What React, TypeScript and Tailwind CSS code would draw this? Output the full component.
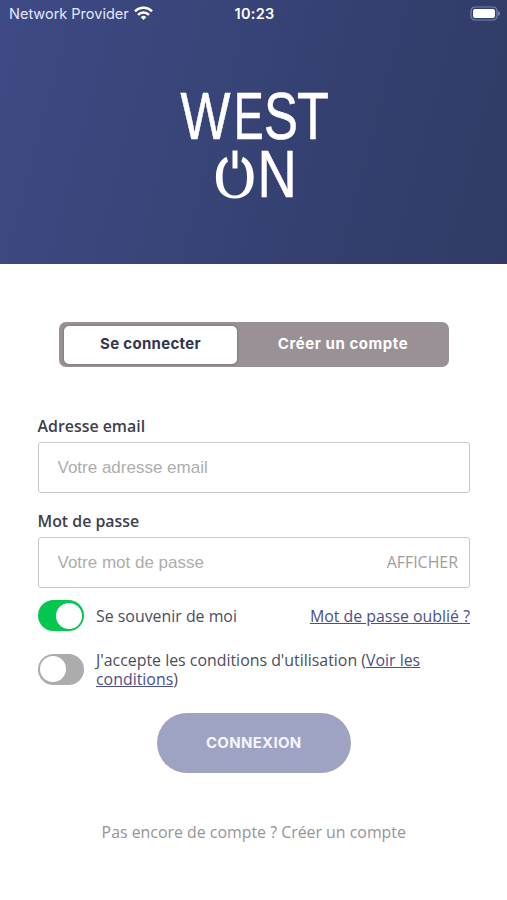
import { useState } from 'react';

const logoLetters = [
  { char: 'W', x: 180, y: 138.7, scale: 0.79 },
  { char: 'E', x: 233.3, y: 138.7, scale: 0.67 },
  { char: 'S', x: 263.4, y: 138.7, scale: 0.76 },
  { char: 'T', x: 296.4, y: 138.7, scale: 0.78 },
  { char: 'N', x: 256.9, y: 197.1, scale: 0.81 },
];

function StatusBar() {
  return (
    <div className="flex h-7 items-center justify-between pr-[7px] pl-[9px] font-['Inter',sans-serif] text-[14.5px] leading-7 text-[#e3e7fa]">
      <div className="flex w-52 items-center gap-[5px]">
        <span className="whitespace-nowrap">Network Provider</span>
        <svg width="19" height="14" viewBox="0 0 19 14" fill="none" stroke="#fff" strokeWidth="2.6" className="-mt-0.5 shrink-0">
          <path d="M1 5.3a12 12 0 0 1 17 0" />
          <path d="M4 8.8a7.8 7.8 0 0 1 11 0" />
          <path d="M9.5 14 6.7 11.2a4 4 0 0 1 5.6 0Z" fill="#fff" stroke="none" />
        </svg>
      </div>
      <span className="font-semibold tracking-[0.3px] text-white">10:23</span>
      <div className="flex w-52 justify-end">
        <svg width="30" height="15" viewBox="0 0 30 15" className="-mt-0.5">
          <rect x="1" y="1" width="26" height="13" rx="4" fill="none" stroke="#7d84b0" strokeWidth="1.2" />
          <rect x="3" y="2.9" width="22" height="9.2" rx="2" fill="#fff" />
          <path d="M28.3 5.3v4.6c1-.4 1.5-1.2 1.5-2.3S29.3 5.7 28.3 5.3Z" fill="#8f96bd" />
        </svg>
      </div>
    </div>
  );
}

function Logo() {
  return (
    <svg
      width="190"
      height="150"
      viewBox="158.5 70 190 150"
      className="mx-auto mt-[42px] block overflow-visible font-['Liberation_Sans',Arial,sans-serif] text-[67px]"
      fill="#fff"
    >
      <g stroke="#fff" strokeWidth="0.6">
        {logoLetters.map((l) => (
          <text key={l.char} transform={`translate(${l.x} ${l.y}) scale(${l.scale} 1)`}>
            {l.char}
          </text>
        ))}
      </g>
      {/* Power symbol */}
      <path d="M232 150.5h5v18h-5Z" />
      <path d="M226 156.8C218.500 160.500 215.400 168 215.400 177.500c0 13 7 21 18.900 21s18.900-8 18.900-21c0-9.500-3.300-17-10.800-20.700l-1.600 4.600c4.300 3.200 5.700 8.400 5.700 16.100 0 11.600-4.400 18-12.200 18s-12.200-6.400-12.200-18c0-7.700 1.200-12.900 5.500-16.100Z" />
    </svg>
  );
}

function Toggle({ checked, onChange, label }: { checked: boolean; onChange: () => void; label: string }) {
  return (
    <button
      role="switch"
      aria-checked={checked}
      aria-label={label}
      onClick={onChange}
      className={`flex h-[31px] w-[46px] shrink-0 items-center rounded-full px-[2px] ${checked ? 'justify-end bg-[#05c74f]' : 'justify-start bg-[#acacac]'}`}
    >
      <span className="size-[26px] rounded-full bg-white" />
    </button>
  );
}

export default function App() {
  const [remember, setRemember] = useState(true);
  const [accepted, setAccepted] = useState(false);
  const [visible, setVisible] = useState(false);

  return (
    <div className="h-[900px] w-[507px] overflow-hidden bg-white font-['Open_Sans',sans-serif] text-[15.9px] text-[#4b4d5c]">
      <header className="h-[263.5px] bg-[linear-gradient(105deg,#3f4a85_0%,#364173_55%,#303b66_100%)]">
        <StatusBar />
        <Logo />
      </header>

      <main className="pt-[58.5px] pr-[37px] pl-[37.5px]">
        {/* Tabs */}
        <div className="ml-[21.5px] flex h-[45px] w-[390px] rounded-[7px] bg-[#999195] py-[3.5px] pr-1 pl-[5px] font-['Inter',sans-serif] text-[15px] font-bold">
          <button className="w-[173px] rounded-[5px] bg-white tracking-[0.3px] text-[#34344f] shadow-[0_0_2px_1px_#817b7e]">
            Se connecter
          </button>
          <button className="flex-1 pl-1 tracking-[0.55px] text-white">Créer un compte</button>
        </div>

        {/* Fields */}
        <label className="mt-[47px] block leading-6 font-semibold text-[#3e404f]" htmlFor="email">
          Adresse email
        </label>
        <input
          id="email"
          type="email"
          placeholder="Votre adresse email"
          className="mt-[3.5px] block h-[51.5px] w-full rounded-[3px] border-[1.5px] border-[#c8c8c8] px-[19px] pt-0.5 font-['Liberation_Sans',Arial,sans-serif] text-[17px] placeholder:text-[#adadad]"
        />
        <label className="mt-4 block leading-6 font-semibold text-[#3e404f]" htmlFor="password">
          Mot de passe
        </label>
        <div className="mt-[3.5px] flex h-[51.5px] w-full items-center rounded-[3px] border-[1.5px] border-[#c8c8c8] pr-[11px] pl-[19px]">
          <input
            id="password"
            type={visible ? 'text' : 'password'}
            placeholder="Votre mot de passe"
            className="min-w-0 flex-1 font-['Liberation_Sans',Arial,sans-serif] text-[17px] placeholder:text-[#adadad]"
          />
          <button onClick={() => setVisible(!visible)} className="pt-px text-[#a09c9e]">
            AFFICHER
          </button>
        </div>

        {/* Options */}
        <div className="mt-3 flex h-[31px] items-center">
          <Toggle checked={remember} onChange={() => setRemember(!remember)} label="Se souvenir de moi" />
          <span className="ml-[12.5px] pt-0.5">Se souvenir de moi</span>
          <a href="#" className="ml-auto pt-0.5 text-[#4a508c] underline">
            Mot de passe oublié ?
          </a>
        </div>
        <div className="mt-[19px] flex h-[38px] items-center">
          <Toggle checked={accepted} onChange={() => setAccepted(!accepted)} label="Conditions d'utilisation" />
          <p className="ml-[12.5px] pt-0.5 leading-[19px]">
            J'accepte les conditions d'utilisation (
            <a href="#" className="text-[#4a508c] underline">
              Voir les
              <br />
              conditions
            </a>
            )
          </p>
        </div>

        <button className="mx-auto mt-[25px] block h-[60px] w-[194px] rounded-full bg-[#9ea3c1] font-['Inter',sans-serif] text-[15px] font-bold tracking-[0.3px] text-[#f3f5ff]">
          CONNEXION
        </button>
        <p className="mt-12 text-center text-[#949499]">Pas encore de compte ? Créer un compte</p>
      </main>
    </div>
  );
}
